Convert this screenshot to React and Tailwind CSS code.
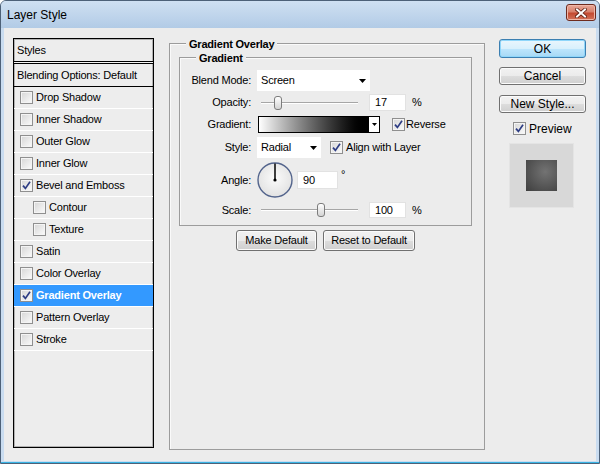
import React from 'react';

const font = "font-['Liberation_Sans',Arial,sans-serif]";

const Check = ({ checked, className = '' }) => (
  <span className={`flex h-[13px] w-[13px] shrink-0 items-center justify-center border border-[#8f8f8f] bg-linear-to-br from-[#d6d6d6] to-[#fbfbfb] shadow-[inset_0_0_0_1px_#f4f4f4] ${className}`}>
    {checked && (
      <svg width="9" height="9" viewBox="0 0 9 9">
        <path d="M1 4.6 L3.4 7.4 L8 0.8" fill="none" stroke="#2e3d84" strokeWidth="1.7" />
      </svg>
    )}
  </span>
);

const Arrow = ({ w = 7, h = 4 }) => (
  <svg width={w} height={h} viewBox={`0 0 ${w} ${h}`}>
    <path d={`M0 0 L${w} 0 L${w / 2} ${h} Z`} fill="#000" />
  </svg>
);

const Slider = ({ pos }) => (
  <div className="relative h-full w-[108px]">
    <div className="absolute left-[4px] right-[7px] top-1/2 h-[2px] -translate-y-1/2 border-t border-b border-t-[#a6a6a6] border-b-white" />
    <div
      className="absolute top-1/2 h-[14px] w-[8px] -translate-y-1/2 rounded-[3px] border border-[#7c7c7c] bg-linear-to-b from-white to-[#d4d4d4]"
      style={{ left: pos }}
    />
  </div>
);

const Field = ({ value, className = '' }) => (
  <div className={`flex items-center bg-white pl-[6px] shadow-[inset_0_0_0_1px_#e2e2e2] ${className}`}>{value}</div>
);

const Btn = ({ children, className = '' }) => (
  <div className={`flex items-center justify-center rounded-[3px] border border-[#707070] bg-[linear-gradient(#f2f2f2,#ebebeb_50%,#dddddd_50%,#cfcfcf)] shadow-[inset_0_0_0_1px_#fbfbfb] ${className}`}>
    {children}
  </div>
);

const styleRows = [
  { label: 'Drop Shadow' },
  { label: 'Inner Shadow' },
  { label: 'Outer Glow' },
  { label: 'Inner Glow' },
  { label: 'Bevel and Emboss', checked: true },
  { label: 'Contour', indent: true },
  { label: 'Texture', indent: true },
  { label: 'Satin' },
  { label: 'Color Overlay' },
  { label: 'Gradient Overlay', checked: true, active: true },
  { label: 'Pattern Overlay' },
  { label: 'Stroke' },
];

const Label = ({ children }) => (
  <div className="w-[72px] shrink-0 pr-px text-right">{children}</div>
);

export default function App() {
  return (
    <div className={`${font} flex h-[464px] w-[600px] flex-col overflow-hidden rounded-t-[6px] border border-[#4d6178] bg-[#c9dcf0] text-[11px] tracking-[-0.2px] text-black`}>
      {/* Title bar */}
      <div className="flex h-[27px] shrink-0 items-center justify-between bg-linear-to-b from-[#cfe0f2] to-[#b2cbe6] pl-[6px] pr-[3px]">
        <span className="text-[12px] tracking-normal text-black">Layer Style</span>
        <div className="mb-[4px] flex h-[17px] w-[30px] items-center justify-center rounded-[3px] border border-[#6e2b1e] bg-[linear-gradient(#e9a899,#d7816c_45%,#c44a31_55%,#d2735a)] shadow-[inset_0_0_0_1px_#f0b7a8]">
          <svg width="12" height="10" viewBox="0 0 12 10">
            <path d="M2 1.5 L10 8.5 M10 1.5 L2 8.5" stroke="#5a1c10" strokeWidth="3.6" strokeLinecap="square" />
            <path d="M2 1.5 L10 8.5 M10 1.5 L2 8.5" stroke="#fff" strokeWidth="2" strokeLinecap="square" />
          </svg>
        </div>
      </div>

      {/* Client area */}
      <div className="mx-[3px] flex h-[433px] shrink-0 items-start bg-[#ececec]">
        {/* Styles list */}
        <div className="ml-[9px] mt-[10px] flex h-[410px] w-[141px] shrink-0 flex-col border border-black bg-[#ededed] shadow-[inset_0_0_0_1px_rgba(0,0,0,0.25)]">
          <div className="flex h-[23px] shrink-0 items-center border-b border-black pl-[3px]">Styles</div>
          <div className="h-px shrink-0 bg-[#f5f5f5]" />
          <div className="flex h-[24px] shrink-0 items-center border-y border-black pl-[3px]">Blending Options: Default</div>
          {styleRows.map((r) => (
            <div
              key={r.label}
              className={`flex h-[22px] shrink-0 items-center gap-[3px] border-b border-white ${r.indent ? 'pl-[19px]' : 'pl-[6px]'} ${r.active ? 'bg-[#3399ff] font-bold text-white' : ''}`}
            >
              <Check checked={r.checked} />
              <span>{r.label}</span>
            </div>
          ))}
        </div>

        {/* Gradient Overlay group */}
        <div className="relative ml-[15px] mt-[15px] h-[407px] w-[316px] shrink-0 border border-[#9c9c9c] shadow-[inset_1px_1px_0_#fafafa]">
          <span className="absolute left-[16px] top-[-8px] bg-[#ececec] px-[3px] font-bold">Gradient Overlay</span>

          <div className="relative ml-[9px] mt-[13px] w-[293px] border border-[#9c9c9c] pb-[7px] pt-[12px] shadow-[inset_1px_1px_0_#fafafa]">
            <span className="absolute left-[16px] top-[-8px] bg-[#ececec] px-[3px] font-bold">Gradient</span>

            {/* Blend Mode */}
            <div className="flex h-[21px] items-center">
              <Label>Blend Mode:</Label>
              <div className="ml-[5px] flex h-full w-[113px] items-center justify-between bg-white pl-[4px] pr-[4px]">
                <span>Screen</span>
                <Arrow />
              </div>
            </div>

            {/* Opacity */}
            <div className="mt-[3px] flex h-[17px] items-center">
              <Label>Opacity:</Label>
              <div className="ml-[5px] h-full">
                <Slider pos={17} />
              </div>
              <Field value="17" className="ml-[4px] h-full w-[37px]" />
              <span className="ml-[6px] self-start">%</span>
            </div>

            {/* Gradient */}
            <div className="mt-[5px] flex h-[17px] items-center">
              <Label>Gradient:</Label>
              <div className="ml-[6px] flex h-full w-[122px] border border-black">
                <div className="h-full flex-1 bg-linear-to-r from-white to-black" />
                <div className="flex h-full w-[11px] items-center justify-center border-l border-black bg-white">
                  <Arrow w={5} h={3} />
                </div>
              </div>
              <Check checked className="ml-[12px]" />
              <span className="ml-[1px]">Reverse</span>
            </div>

            {/* Style */}
            <div className="mt-[4px] flex h-[21px] items-center">
              <Label>Style:</Label>
              <div className="ml-[5px] flex h-full w-[64px] items-center justify-between bg-white pl-[4px] pr-[4px]">
                <span>Radial</span>
                <Arrow />
              </div>
              <Check checked className="ml-[9px]" />
              <span className="ml-[3px]">Align with Layer</span>
            </div>

            {/* Angle */}
            <div className="mt-[4px] flex h-[36px] items-center">
              <Label>Angle:</Label>
              <svg className="ml-[5px]" width="36" height="36" viewBox="0 0 36 36">
                <defs>
                  <radialGradient id="dial" cx="50%" cy="45%" r="55%">
                    <stop offset="0%" stopColor="#fbfbfb" />
                    <stop offset="100%" stopColor="#e2e2e2" />
                  </radialGradient>
                </defs>
                <circle cx="18" cy="18" r="17" fill="url(#dial)" stroke="#53648c" strokeWidth="1.4" />
                <line x1="18" y1="18" x2="18" y2="1.5" stroke="#000" strokeWidth="1.5" />
                <circle cx="18" cy="18" r="1.6" fill="#000" />
              </svg>
              <Field value="90" className="ml-[4px] h-[18px] w-[41px]" />
              <span className="ml-[3px] mt-[4px] self-start">°</span>
            </div>

            {/* Scale */}
            <div className="mt-[4px] flex h-[16px] items-center">
              <Label>Scale:</Label>
              <div className="ml-[5px] h-full">
                <Slider pos={60} />
              </div>
              <Field value="100" className="ml-[4px] h-full w-[37px]" />
              <span className="ml-[6px] self-start">%</span>
            </div>
          </div>

          <div className="ml-[66px] mt-[4px] flex gap-[6px]">
            <Btn className="h-[21px] w-[81px]">Make Default</Btn>
            <Btn className="h-[21px] w-[92px]">Reset to Default</Btn>
          </div>
        </div>

        {/* Right column */}
        <div className="ml-[14px] mt-[11px] flex w-[87px] shrink-0 flex-col text-[12px] tracking-normal">
          <div className="flex h-[19px] items-center justify-center rounded-[3px] border border-[#3c7fb1] bg-[linear-gradient(#eaf6fd,#d9f0fc_50%,#bee6fd_50%,#a7d9f5)] shadow-[inset_0_0_0_1px_#8fd6fa]">
            OK
          </div>
          <Btn className="mt-[9px] h-[18px]">Cancel</Btn>
          <Btn className="mt-[10px] h-[18px]">New Style...</Btn>
          <div className="mt-[8px] flex h-[15px] items-center pl-[14px]">
            <Check checked />
            <span className="ml-[3px]">Preview</span>
          </div>
          <div className="ml-[10px] mt-[7px] flex h-[65px] w-[65px] items-center justify-center bg-[#d8d8d8] shadow-[inset_0_0_0_1px_#e4e4e4]">
            <div className="h-[31px] w-[31px] bg-[radial-gradient(circle_at_62%_38%,#737373,#3e3e3e)]" />
          </div>
        </div>
      </div>

      {/* Bottom frame */}
      <div className="mx-0 mt-px h-[2px] bg-[#39b4e4]" />
    </div>
  );
}
